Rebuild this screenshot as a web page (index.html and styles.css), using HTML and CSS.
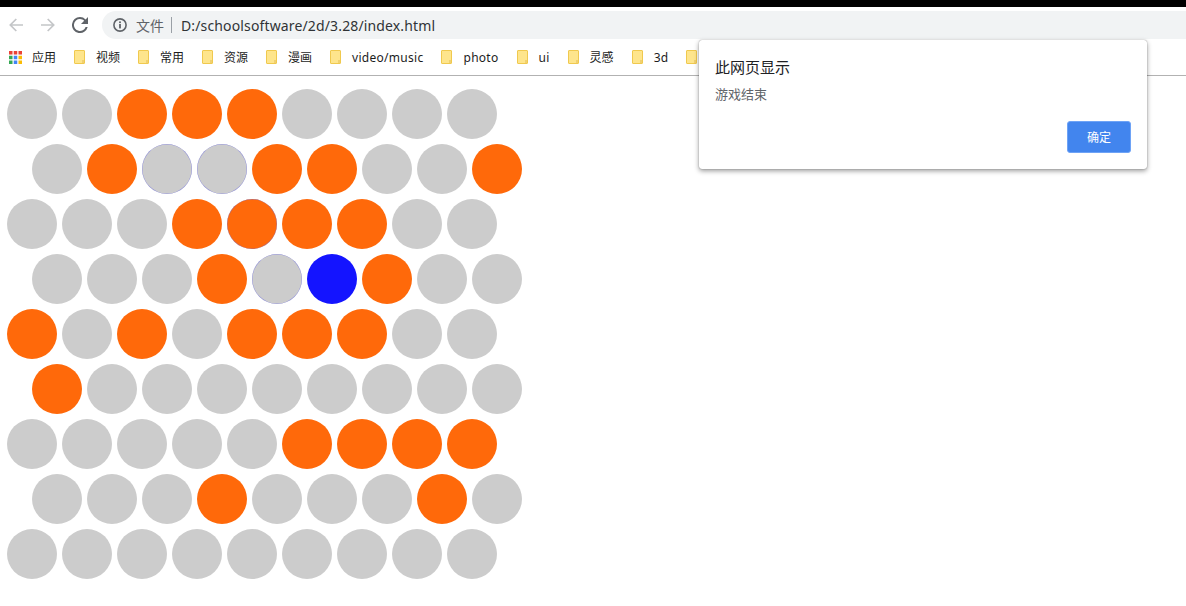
FILE: index.html
```html
<!DOCTYPE html>
<html lang="zh-CN">
<head>
<meta charset="utf-8">
<title>index.html</title>
<link rel="stylesheet" href="styles.css">
</head>
<body>
<header class="chrome">
  <div class="topbar"></div>
  <div class="toolbar">
    <div class="nav">
      <svg class="nav-icon" viewBox="0 0 16 16"><path d="M15 8H2.500M8.300 2 2.300 8l6 6" fill="none" stroke="#c4c6c8" stroke-width="1.700"/></svg>
      <svg class="nav-icon" viewBox="0 0 16 16"><path d="M1 8h12.500M7.700 2l6 6-6 6" fill="none" stroke="#c4c6c8" stroke-width="1.700"/></svg>
      <svg class="nav-icon" viewBox="0 0 16 16"><path d="M13.600 2.400A7.900 7.900 0 0 0 8 0a8 8 0 1 0 7.700 10h-2.100A6 6 0 1 1 8 2c1.700 0 3.100.7 4.200 1.800L9 7h7V0z" fill="#5f6368"/></svg>
    </div>
    <div class="omnibox">
      <svg class="info" viewBox="0 0 14 14"><circle cx="7" cy="7" r="6.100" fill="none" stroke="#5f6368" stroke-width="1.600"/><rect x="6.100" y="6" width="1.800" height="4.400" fill="#5f6368"/><rect x="6.100" y="3.400" width="1.800" height="1.700" fill="#5f6368"/></svg>
      <span class="scheme">文件</span>
      <span class="divider"></span>
      <span class="url">D:/schoolsoftware/2d/3.28/index.html</span>
    </div>
  </div>
  <nav class="bookmarks">
    <div class="bookmark apps">
      <svg class="apps-icon" viewBox="0 0 13 13">
        <rect x="0" y="0" width="3.500" height="3.500" fill="#ea4335"/><rect x="4.750" y="0" width="3.500" height="3.500" fill="#ea4335"/><rect x="9.500" y="0" width="3.500" height="3.500" fill="#ea4335"/>
        <rect x="0" y="4.750" width="3.500" height="3.500" fill="#34a853"/><rect x="4.750" y="4.750" width="3.500" height="3.500" fill="#4285f4"/><rect x="9.500" y="4.750" width="3.500" height="3.500" fill="#fbbc05"/>
        <rect x="0" y="9.500" width="3.500" height="3.500" fill="#34a853"/><rect x="4.750" y="9.500" width="3.500" height="3.500" fill="#4285f4"/><rect x="9.500" y="9.500" width="3.500" height="3.500" fill="#fbbc05"/>
      </svg>
      <span>应用</span>
    </div>
    <div class="bookmark"><i class="folder"></i><span>视频</span></div>
    <div class="bookmark"><i class="folder"></i><span>常用</span></div>
    <div class="bookmark"><i class="folder"></i><span>资源</span></div>
    <div class="bookmark"><i class="folder"></i><span>漫画</span></div>
    <div class="bookmark"><i class="folder"></i><span class="latin">video/music</span></div>
    <div class="bookmark"><i class="folder"></i><span class="latin">photo</span></div>
    <div class="bookmark"><i class="folder"></i><span class="latin">ui</span></div>
    <div class="bookmark"><i class="folder"></i><span>灵感</span></div>
    <div class="bookmark"><i class="folder"></i><span class="latin">3d</span></div>
    <div class="bookmark"><i class="folder"></i></div>
  </nav>
</header>

<main class="board">
  <div class="row">
    <b class="cell"></b><b class="cell"></b><b class="cell wall"></b><b class="cell wall"></b><b class="cell wall"></b><b class="cell"></b><b class="cell"></b><b class="cell"></b><b class="cell"></b>
  </div>
  <div class="row odd">
    <b class="cell"></b><b class="cell wall"></b><b class="cell visited"></b><b class="cell visited"></b><b class="cell wall"></b><b class="cell wall"></b><b class="cell"></b><b class="cell"></b><b class="cell wall"></b>
  </div>
  <div class="row">
    <b class="cell"></b><b class="cell"></b><b class="cell"></b><b class="cell wall"></b><b class="cell wall visited"></b><b class="cell wall"></b><b class="cell wall"></b><b class="cell"></b><b class="cell"></b>
  </div>
  <div class="row odd">
    <b class="cell"></b><b class="cell"></b><b class="cell"></b><b class="cell wall"></b><b class="cell visited"></b><b class="cell cat"></b><b class="cell wall"></b><b class="cell"></b><b class="cell"></b>
  </div>
  <div class="row">
    <b class="cell wall"></b><b class="cell"></b><b class="cell wall"></b><b class="cell"></b><b class="cell wall"></b><b class="cell wall"></b><b class="cell wall"></b><b class="cell"></b><b class="cell"></b>
  </div>
  <div class="row odd">
    <b class="cell wall"></b><b class="cell"></b><b class="cell"></b><b class="cell"></b><b class="cell"></b><b class="cell"></b><b class="cell"></b><b class="cell"></b><b class="cell"></b>
  </div>
  <div class="row">
    <b class="cell"></b><b class="cell"></b><b class="cell"></b><b class="cell"></b><b class="cell"></b><b class="cell wall"></b><b class="cell wall"></b><b class="cell wall"></b><b class="cell wall"></b>
  </div>
  <div class="row odd">
    <b class="cell"></b><b class="cell"></b><b class="cell"></b><b class="cell wall"></b><b class="cell"></b><b class="cell"></b><b class="cell"></b><b class="cell wall"></b><b class="cell"></b>
  </div>
  <div class="row">
    <b class="cell"></b><b class="cell"></b><b class="cell"></b><b class="cell"></b><b class="cell"></b><b class="cell"></b><b class="cell"></b><b class="cell"></b><b class="cell"></b>
  </div>
</main>

<div class="dialog" role="alertdialog">
  <h1 class="dialog-title">此网页显示</h1>
  <p class="dialog-message">游戏结束</p>
  <div class="dialog-actions"><button class="dialog-ok">确定</button></div>
</div>
</body>
</html>
```

FILE: styles.css
```css
* { box-sizing: border-box; }

html, body {
  margin: 0;
  height: 606px;
  overflow: hidden;
  background: #fff;
  font-family: "Noto Sans", "Noto Sans CJK SC", sans-serif;
}

.chrome { border-bottom: 1px solid #b2b2b2; height: 76px; }

.topbar { height: 7px; background: #000; }

.toolbar {
  height: 32px;
  display: flex;
  align-items: flex-end;
  padding-left: 8px;
}

.nav {
  width: 94px;
  height: 28px;
  display: flex;
  align-items: center;
  gap: 16px;
}

.nav-icon { width: 16px; height: 16px; flex: none; }

.omnibox {
  flex: 1;
  height: 28px;
  display: flex;
  align-items: center;
  padding-left: 11px;
  background: #f1f3f4;
  border-radius: 14px 0 0 14px;
}

.info { width: 14px; height: 14px; flex: none; }

.scheme {
  margin-left: 9px;
  font-size: 14px;
  color: #5f6368;
}

.divider {
  width: 1px;
  height: 16px;
  margin: 0 9px 0 7px;
  background: #9aa0a6;
}

.url {
  font-size: 14px;
  letter-spacing: 0.14px;
  color: #303336;
  white-space: nowrap;
}

.bookmarks {
  height: 36px;
  display: flex;
  align-items: center;
  gap: 18px;
  padding-left: 9px;
}

.bookmark {
  display: flex;
  align-items: center;
  font-size: 12px;
  color: #1c1c1c;
  white-space: nowrap;
}

.latin { letter-spacing: 0.28px; }

.apps-icon { width: 13px; height: 13px; margin-right: 10px; flex: none; }

.folder {
  position: relative;
  display: block;
  width: 11px;
  height: 14px;
  margin-right: 11px;
  background: #fee58c;
  border: 1px solid #f0c94e;
  border-radius: 1px;
}

.folder::after {
  content: "";
  position: absolute;
  right: 0;
  bottom: 0;
  width: 2px;
  height: 3px;
  background: #f0d070;
}

.board {
  display: flex;
  flex-direction: column;
  gap: 5px;
  padding: 13px 0 0 7px;
}

.row { display: flex; gap: 5px; }
.row.odd { padding-left: 25px; }

.cell {
  display: block;
  width: 50px;
  height: 50px;
  border-radius: 50%;
  background: #cccccc;
}

.cell.wall { background: #ff690a; }
.cell.cat { background: #1414ff; }
.cell.visited { box-shadow: inset 0 0 0 0.5px rgba(110, 110, 225, 0.6); }

.dialog {
  position: absolute;
  left: 699px;
  top: 40px;
  width: 448px;
  height: 129px;
  padding: 17px 16px 16px;
  background: #fff;
  border-radius: 3px;
  box-shadow: 0 0 1px rgba(0, 0, 0, 0.5), 0 2px 5px rgba(0, 0, 0, 0.4);
  display: flex;
  flex-direction: column;
}

.dialog-title {
  margin: 0;
  font-size: 15px;
  font-weight: 400;
  line-height: 20px;
  color: #202124;
}

.dialog-message {
  margin: 8px 0 0;
  font-size: 13px;
  line-height: 18px;
  color: #5f6368;
}

.dialog-actions {
  margin-top: auto;
  display: flex;
  justify-content: flex-end;
}

.dialog-ok {
  width: 64px;
  height: 32px;
  padding: 0;
  border: 1px solid #6ea3f6;
  border-radius: 3px;
  background: #4285ee;
  color: #fff;
  font: inherit;
  font-size: 12px;
}
```
